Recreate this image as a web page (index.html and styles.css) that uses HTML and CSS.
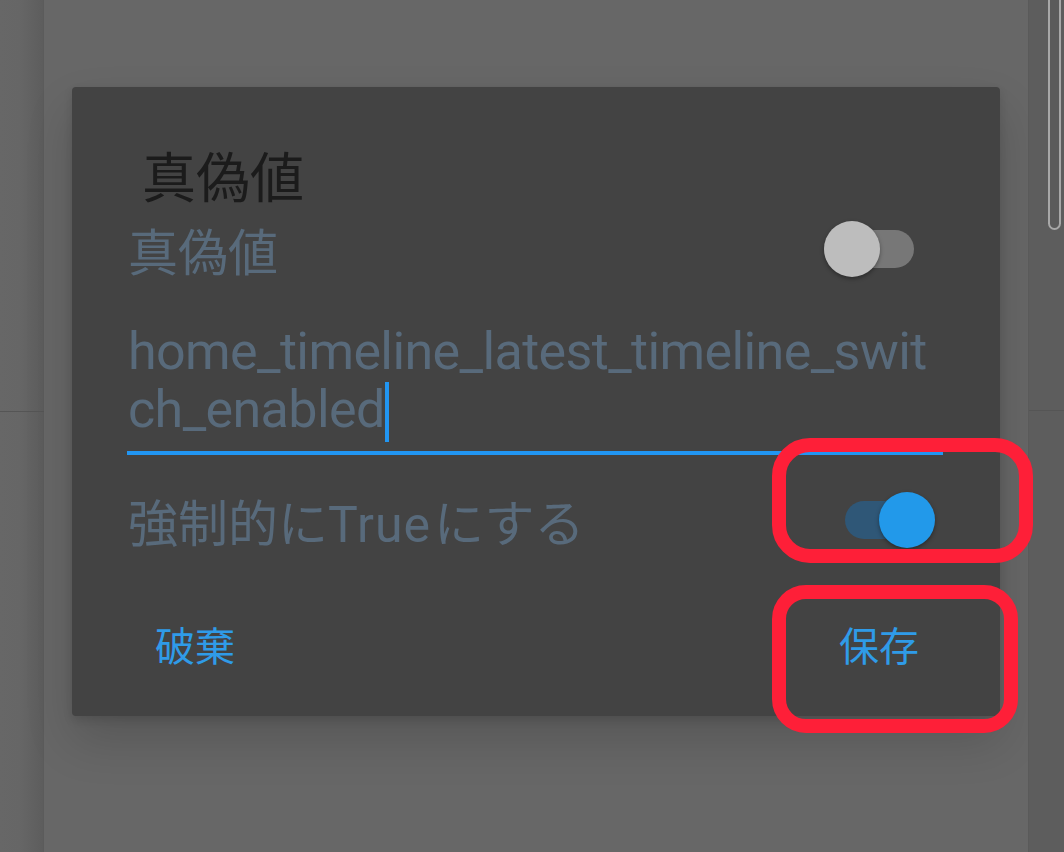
FILE: index.html
```html
<!DOCTYPE html>
<html lang="ja">
<head>
  <meta charset="utf-8">
  <title>真偽値</title>
  <link rel="stylesheet" href="styles.css">
</head>
<body>
  <div class="device">
    <div class="edge edge-left">
      <div class="edge-rule"></div>
    </div>

    <div class="screen">
      <div class="dialog">
        <h2 class="dialog-title">真偽値</h2>

        <div class="pref-row pref-row-top">
          <span class="pref-label">真偽値</span>
          <span class="switch">
            <span class="switch-track"></span>
            <span class="switch-thumb"></span>
          </span>
        </div>

        <div class="field">
          <span class="field-text">home_timeline_latest_timeline_switch_enabled<span class="caret"></span></span>
        </div>

        <div class="pref-row pref-row-force">
          <span class="pref-label">強制的に<span class="latin">True</span>にする</span>
          <span class="switch on">
            <span class="switch-track"></span>
            <span class="switch-thumb"></span>
          </span>
        </div>

        <div class="dialog-actions">
          <button class="text-btn">破棄</button>
          <button class="text-btn">保存</button>
        </div>
      </div>
    </div>

    <div class="edge edge-right">
      <div class="scroll-thumb"></div>
      <div class="edge-rule"></div>
    </div>
  </div>

  <!-- annotation marks -->
  <div class="mark mark-switch"></div>
  <div class="mark mark-save"></div>
</body>
</html>
```
FILE: styles.css
```css
html, body {
  margin: 0;
  padding: 0;
}
body {
  width: 1064px;
  height: 852px;
  overflow: hidden;
  background-color: #676767;
  font-family: Roboto, "Noto Sans CJK JP", sans-serif;
  position: relative;
}

.device {
  display: flex;
  height: 852px;
}

.edge {
  flex: none;
}
.edge-left {
  width: 44px;
  background: linear-gradient(to right, #676767 0, #666666 20px, #5d5d5d 43px, #595959 44px);
}
.edge-left .edge-rule {
  margin-top: 411px;
  height: 1px;
  background-color: #555555;
}
.edge-right {
  width: 36px;
  background-color: #5d5d5d;
  border-left: 1px solid #5a5a5a;
  box-sizing: border-box;
}
.scroll-thumb {
  margin-left: 19px;
  width: 13px;
  height: 230px;
  box-sizing: border-box;
  border: 2px solid #a8a8a8;
  border-top: none;
  border-radius: 0 0 7px 7px;
  background-color: #5b5b5b;
}
.edge-right .edge-rule {
  margin-top: 180px;
  height: 1px;
  background-color: #555555;
}

.screen {
  flex: 1;
  padding-top: 87px;
  padding-left: 28px;
}

.dialog {
  width: 928px;
  height: 629px;
  box-sizing: border-box;
  background-color: #434343;
  border-radius: 4px;
  box-shadow: 0 24px 48px rgba(0, 0, 0, 0.16), 0 4px 10px rgba(0, 0, 0, 0.12);
  padding: 56px 56px 0 56px;
}

.dialog-title {
  margin: 0 0 12px 14px;
  font-family: "Noto Sans CJK JP", sans-serif;
  font-weight: normal;
  font-size: 54px;
  line-height: 64px;
  color: #1b1b1b;
}

.pref-row {
  display: flex;
  align-items: center;
  justify-content: space-between;
  height: 60px;
}
.pref-row-top {
  padding-right: 30px;
}
.pref-row-force {
  margin-top: 35px;
  padding-right: 9px;
}
.pref-label {
  font-size: 50px;
  color: #586a7b;
  white-space: nowrap;
}
.pref-label .latin {
  letter-spacing: 1px;
  margin-right: 3px;
}

.switch {
  position: relative;
  width: 90px;
  height: 56px;
  flex: none;
}
.switch-track {
  position: absolute;
  right: 0;
  top: 9px;
  width: 64px;
  height: 38px;
  border-radius: 19px;
  background-color: #777777;
}
.switch-thumb {
  position: absolute;
  left: 0;
  top: 0;
  width: 56px;
  height: 56px;
  border-radius: 50%;
  background-color: #bdbdbd;
  box-shadow: 0 2px 4px rgba(0, 0, 0, 0.35);
}
.switch.on .switch-track {
  left: 0;
  right: auto;
  width: 62px;
  background-color: #2f5777;
}
.switch.on .switch-thumb {
  left: auto;
  right: 0;
  background-color: #2299ea;
}

.field {
  margin-top: 44px;
  width: 816px;
  padding-bottom: 9px;
  border-bottom: 4px solid #2196f3;
  margin-left: -1px;
  padding-left: 1px;
  box-sizing: border-box;
}
.field-text {
  font-family: Roboto, sans-serif;
  font-size: 52px;
  line-height: 58px;
  letter-spacing: -0.6px;
  color: #586a7b;
  word-break: break-all;
}
.caret {
  display: inline-block;
  width: 4px;
  height: 60px;
  margin-top: 1px;
  vertical-align: top;
  background-color: #2196f3;
}

.dialog-actions {
  display: flex;
  justify-content: space-between;
  margin-top: 70px;
  margin-right: -2px;
}
.text-btn {
  background: none;
  border: none;
  padding: 0 27px;
  font-family: "Noto Sans CJK JP", sans-serif;
  font-size: 40px;
  line-height: 48px;
  letter-spacing: 0;
  color: #2f9be8;
  cursor: pointer;
}

.mark {
  position: absolute;
  box-sizing: border-box;
  border: 14px solid #fe1f38;
}
.mark-switch {
  left: 772px;
  top: 438px;
  width: 261px;
  height: 125px;
  border-radius: 38px;
}
.mark-save {
  left: 772px;
  top: 585px;
  width: 246px;
  height: 148px;
  border-radius: 34px;
}
```
